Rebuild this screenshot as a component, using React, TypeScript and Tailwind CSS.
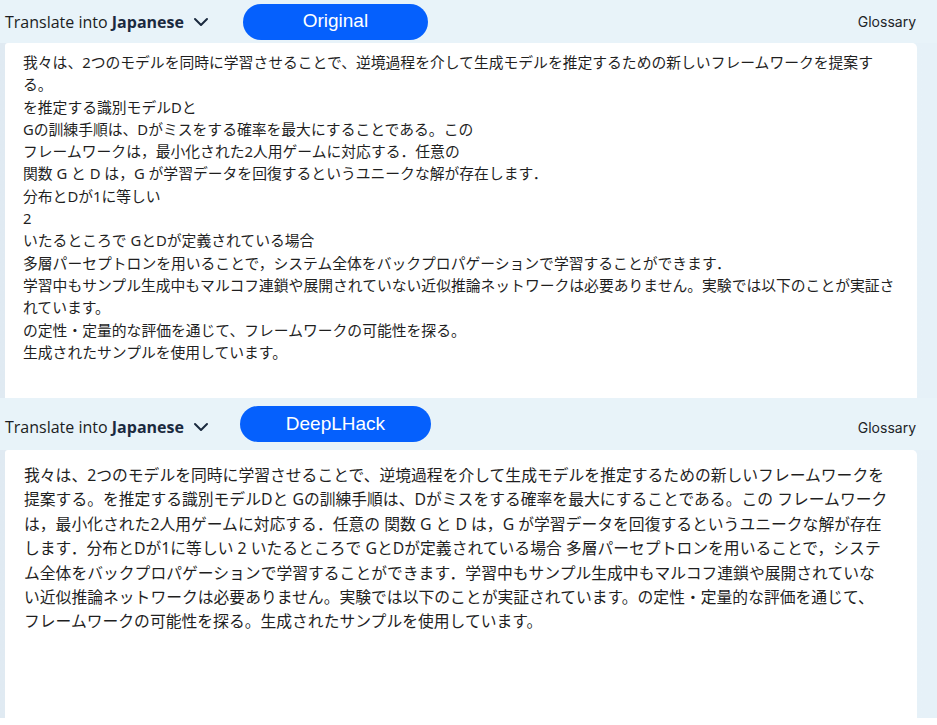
import React from "react";
import { ChevronDown } from "lucide-react";

const topLines = [
  "我々は、2つのモデルを同時に学習させることで、逆境過程を介して生成モデルを推定するための新しいフレームワークを提案する。",
  "を推定する識別モデルDと",
  "Gの訓練手順は、Dがミスをする確率を最大にすることである。この",
  "フレームワークは，最小化された2人用ゲームに対応する．任意の",
  "関数 G と D は，G が学習データを回復するというユニークな解が存在します．",
  "分布とDが1に等しい",
  "2",
  "いたるところで GとDが定義されている場合",
  "多層パーセプトロンを用いることで，システム全体をバックプロパゲーションで学習することができます．",
  "学習中もサンプル生成中もマルコフ連鎖や展開されていない近似推論ネットワークは必要ありません。実験では以下のことが実証されています。",
  "の定性・定量的な評価を通じて、フレームワークの可能性を探る。",
  "生成されたサンプルを使用しています。",
];

const bottomLines = [
  "我々は、2つのモデルを同時に学習させることで、逆境過程を介して生成モデルを推定するための新しいフレームワークを",
  "提案する。を推定する識別モデルDと Gの訓練手順は、Dがミスをする確率を最大にすることである。この フレームワーク",
  "は，最小化された2人用ゲームに対応する．任意の 関数 G と D は，G が学習データを回復するというユニークな解が存在",
  "します．分布とDが1に等しい 2 いたるところで GとDが定義されている場合 多層パーセプトロンを用いることで，システ",
  "ム全体をバックプロパゲーションで学習することができます．学習中もサンプル生成中もマルコフ連鎖や展開されていな",
  "い近似推論ネットワークは必要ありません。実験では以下のことが実証されています。の定性・定量的な評価を通じて、",
  "フレームワークの可能性を探る。生成されたサンプルを使用しています。",
];

function Header({ label, btnWidth, btnGap, textShift }: { label: string; btnWidth: string; btnGap: string; textShift: string }) {
  return (
    <div className="flex items-center justify-between pl-[5px] pr-[21px] h-full">
      <div className="flex items-center">
        <div className={`flex items-center ${textShift}`}>
          <span className="text-[16px] text-[#1b1d22] font-['Open_Sans',sans-serif]">
            Translate into <span className="font-bold text-[#1b2a3f]">Japanese</span>
          </span>
          <ChevronDown size={24} strokeWidth={2} className="ml-[5px] text-[#1b2a3f]" />
        </div>
        <div
          className={`${btnGap} ${btnWidth} h-[36px] rounded-full bg-[#0560fd] flex items-center justify-center text-white text-[19px] font-['Liberation_Sans',Arial,sans-serif]`}
        >
          {label}
        </div>
      </div>
      <span className={`text-[14px] text-[#222428] font-['Inter',sans-serif] ${textShift}`}>Glossary</span>
    </div>
  );
}

export default function App() {
  return (
    <div className="w-[937px] h-[725px] bg-white overflow-hidden">
      <div className="h-[718px] bg-[#e8f3f9] flex flex-col">
        <div className="h-[43px] shrink-0">
          <Header label="Original" btnWidth="w-[185px]" btnGap="ml-[30px]" textShift="" />
        </div>
        <div className="h-[355px] shrink-0 pl-[5px] pr-[20px] bg-gradient-to-r from-[#e0eaf2] via-[#e8f3f9] to-[#e6f1f8]">
          <div className="h-full w-[912px] bg-white rounded-tr-[5px] rounded-tl-[3px] pl-[18px] pr-[18px] pt-[8px] text-[14.8px] leading-[22.3px] text-[#1f1f1f] font-['Noto_Sans','Noto_Sans_CJK_JP',sans-serif]">
            {topLines.map((l, i) => (
              <div key={i}>{l}</div>
            ))}
          </div>
        </div>
        <div className="h-[52px] shrink-0">
          <Header label="DeepLHack" btnWidth="w-[191px]" btnGap="ml-[27px]" textShift="translate-y-[3px]" />
        </div>
        <div className="flex-1 pl-[5px] pr-[20px] bg-gradient-to-r from-[#e0eaf2] via-[#e8f3f9] to-[#e6f1f8]">
          <div className="h-full w-[912px] bg-white rounded-tr-[5px] rounded-tl-[3px] pl-[19px] pr-[10px] pt-[13px] text-[15.8px] leading-[24.4px] text-[#1f1f1f] font-['Noto_Sans','Noto_Sans_CJK_JP',sans-serif]">
            {bottomLines.map((l, i) => (
              <div key={i} className="whitespace-nowrap">{l}</div>
            ))}
          </div>
        </div>
      </div>
    </div>
  );
}
